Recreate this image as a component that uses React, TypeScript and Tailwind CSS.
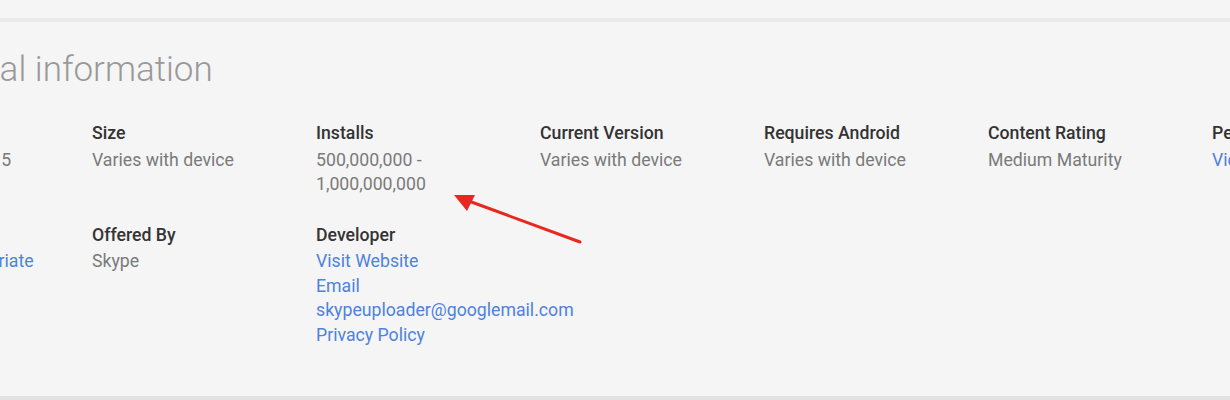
import React from "react";

type Item = { label: string; values: string[]; link?: boolean };

const rowOne: Item[] = [
  { label: "Updated", values: ["November 5, 2015"] },
  { label: "Size", values: ["Varies with device"] },
  { label: "Installs", values: ["500,000,000 -", "1,000,000,000"] },
  { label: "Current Version", values: ["Varies with device"] },
  { label: "Requires Android", values: ["Varies with device"] },
  { label: "Content Rating", values: ["Medium Maturity"] },
  { label: "Permissions", values: ["View details"], link: true },
];

const rowTwo: Item[] = [
  { label: "Report", values: ["Flag as inappropriate"], link: true },
  { label: "Offered By", values: ["Skype"] },
  {
    label: "Developer",
    values: ["Visit Website", "Email", "skypeuploader@googlemail.com", "Privacy Policy"],
    link: true,
  },
];

function Cell({ item }: { item: Item }) {
  return (
    <div className="w-[224px] shrink-0 text-[17.7px] leading-[24.5px]">
      <div className="font-medium text-[#333] mb-[2px] whitespace-nowrap">{item.label}</div>
      {item.values.map((v) => (
        <div
          key={v}
          className={item.link ? "text-[#4d82df] whitespace-nowrap" : "text-[#7a7a7a] whitespace-nowrap"}
        >
          {v}
        </div>
      ))}
    </div>
  );
}

export default function App() {
  return (
    <div
      className="relative w-[1230px] h-[400px] overflow-hidden bg-[#f5f5f5]"
      style={{ fontFamily: "Roboto, 'Liberation Sans', sans-serif" }}
    >
      <div className="h-[18px]" />
      <div className="h-[4px] bg-[#eaeaea]" />
      <div className="h-[374px] pt-[28px]">
        <h2 className="ml-[-127px] text-[35px] leading-[40px] font-light text-[#999] whitespace-nowrap">
          Additional information
        </h2>
        <div className="ml-[-132px] mt-[31px]">
          <div className="flex mb-[26px]">
            {rowOne.map((it) => (
              <Cell key={it.label} item={it} />
            ))}
          </div>
          <div className="flex">
            {rowTwo.map((it) => (
              <Cell key={it.label} item={it} />
            ))}
          </div>
        </div>
      </div>
      <div className="h-[4px] bg-[#e2e2e2]" />

      <svg className="absolute left-0 top-0 pointer-events-none" width="1230" height="400">
        <line x1="580" y1="242" x2="466" y2="200" stroke="#e8281e" strokeWidth="3" strokeLinecap="round" />
        <polygon points="454,195 475,195 467,211" fill="#e8281e" />
      </svg>
    </div>
  );
}
